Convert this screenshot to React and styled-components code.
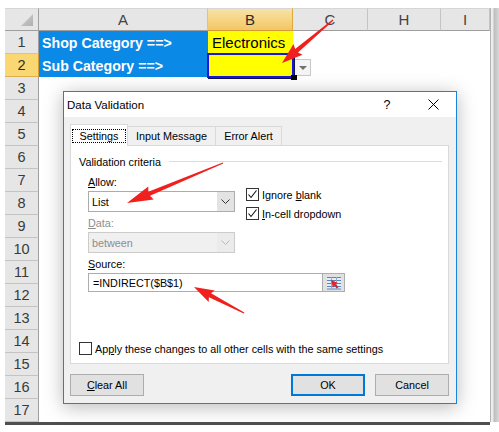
import React from "react";
import styled, { createGlobalStyle } from "styled-components";

const GlobalStyle = createGlobalStyle`
  html, body {
    margin: 0;
    padding: 0;
    background: #fff;
  }
  body {
    font-family: "Liberation Sans", Arial, sans-serif;
  }
  * {
    box-sizing: border-box;
  }
`;

const Stage = styled.div`
  position: relative;
  width: 499px;
  height: 432px;
  overflow: hidden;
  background: #fff;
  padding-top: 8px;
`;

const SheetArea = styled.div`
  display: flex;
  padding-left: 5px;
`;

const Sheet = styled.div`
  display: grid;
  grid-template-columns: 34px 169px 85px 75px 73px 49px;
  grid-template-rows: repeat(18, 23px);
`;

const ScrollEdge = styled.div`
  width: 9px;
  height: 414px;
  border-left: 1px solid #b4b4b4;
  background: linear-gradient(90deg, #ececec 0, #ececec 2px, #bdbdbd 3px, #d8d8d8 100%);
`;

const BottomRule = styled.div`
  margin-left: 5px;
  width: 485px;
  height: 3px;
  background: #4f4f4f;
`;

const CornerCell = styled.div`
  display: flex;
  justify-content: flex-end;
  align-items: flex-end;
  padding: 0 5px 4px 0;
  background: #e6e6e6;
  border-top: 1px solid #d6d6d6;
  border-right: 1px solid #9e9e9e;
  border-bottom: 1px solid #9e9e9e;
`;

const CornerTriangle = styled.div`
  width: 12px;
  height: 12px;
  background: linear-gradient(135deg, #d0d0d0, #b0b0b0);
  clip-path: polygon(100% 0, 100% 100%, 0 100%);
`;

const ColHead = styled.div`
  display: flex;
  align-items: center;
  justify-content: center;
  font-size: 15px;
  color: ${(p) => (p.$active ? "#2b2b2b" : "#444")};
  background: ${(p) =>
    p.$active ? "linear-gradient(180deg, #f9e2a6 0%, #f2c763 100%)" : "#e6e6e6"};
  border-top: 1px solid #d6d6d6;
  border-right: 1px solid ${(p) => (p.$active ? "#e0a640" : "#c4c4c4")};
  border-bottom: 1px solid ${(p) => (p.$active ? "#d79a2f" : "#9e9e9e")};
`;

const RowHead = styled.div`
  display: flex;
  align-items: center;
  justify-content: center;
  font-size: 14.5px;
  color: ${(p) => (p.$active ? "#2b2b2b" : "#3a3a3a")};
  background: ${(p) => (p.$active ? "#f9d874" : "#e6e6e6")};
  border-right: 1px solid ${(p) => (p.$active ? "#d79a2f" : "#9e9e9e")};
  border-bottom: 1px solid ${(p) => (p.$active ? "#e0b050" : "#c4c4c4")};
`;

const Cell = styled.div`
  position: relative;
  display: flex;
  align-items: center;
  padding-left: ${(p) => (p.$bold ? "3px" : "4px")};
  background: ${(p) => p.$bg || "#fff"};
  color: ${(p) => (p.$bold ? "#fff" : "#000")};
  font-weight: ${(p) => (p.$bold ? 700 : 400)};
  font-size: ${(p) => (p.$bold ? "14.2px" : "15px")};
  white-space: nowrap;
`;

const ActiveCell = styled(Cell)`
  z-index: 2;
  &::before {
    content: "";
    position: absolute;
    inset: -1px;
    border: 2px solid #1818d8;
    box-shadow: 1px 1px 0 #101060;
  }
  &::after {
    content: "";
    position: absolute;
    right: -4px;
    bottom: -3px;
    width: 6px;
    height: 5px;
    background: #000;
  }
`;

const DropCell = styled.div`
  display: flex;
  align-items: flex-end;
  padding: 0 0 1px 1px;
`;

const DropButton = styled.div`
  width: 17px;
  height: 17px;
  display: flex;
  align-items: center;
  justify-content: center;
  background: #f4f4f4;
  border: 1px solid #c8c8c8;
  &::after {
    content: "";
    width: 0;
    height: 0;
    border-left: 4px solid transparent;
    border-right: 4px solid transparent;
    border-top: 4px solid #707070;
  }
`;

/* dialog */

const Dialog = styled.div`
  position: absolute;
  left: 63px;
  top: 91px;
  width: 394px;
  height: 313px;
  display: flex;
  flex-direction: column;
  border: 1px solid #1c84d6;
  background: #f0f0f0;
  box-shadow: 0 3px 18px rgba(0, 0, 0, 0.28);
  font-family: "Liberation Sans", Arial, sans-serif;
  font-size: 10.8px;
  color: #000;
  z-index: 5;

  u {
    text-decoration: underline;
    text-underline-offset: 1px;
  }
`;

const TitleBar = styled.div`
  height: 25px;
  display: flex;
  align-items: center;
  padding-left: 3px;
  background: #fff;
  font-size: 11.5px;
`;

const TitleText = styled.div`
  flex: 1;
`;

const TitleButton = styled.div`
  width: 46px;
  height: 25px;
  display: flex;
  align-items: center;
  justify-content: center;
  font-size: 12.5px;
`;

const Body = styled.div`
  flex: 1;
  display: flex;
  flex-direction: column;
  padding: 7px 7px 0 6px;
`;

const Tabs = styled.div`
  display: flex;
  align-items: flex-end;
  height: 21px;
`;

const Tab = styled.div`
  position: relative;
  z-index: ${(p) => (p.$active ? 1 : 0)};
  width: ${(p) => p.$w}px;
  height: ${(p) => (p.$active ? "22px" : "19px")};
  margin-bottom: ${(p) => (p.$active ? "-1px" : "0")};
  margin-left: ${(p) => (p.$first ? "0" : "-1px")};
  display: flex;
  align-items: center;
  justify-content: center;
  background: ${(p) => (p.$active ? "#fff" : "#f0f0f0")};
  border: 1px solid #d9d9d9;
  border-bottom: none;
`;

const FocusRing = styled.span`
  display: flex;
  align-items: center;
  height: 14px;
  padding: 0 6px;
  border: 1px dotted #000;
`;

const Panel = styled.div`
  height: 219px;
  display: flex;
  flex-direction: column;
  padding: 8px 6px 0 8px;
  background: #fff;
  border: 1px solid #d9d9d9;
`;

const GroupHeader = styled.div`
  height: 16px;
  display: flex;
  align-items: center;
  gap: 8px;
  &::after {
    content: "";
    flex: 1;
    border-top: 1px solid #dcdcdc;
    margin-top: -1px;
  }
`;

const Indent = styled.div`
  display: flex;
  flex-direction: column;
  padding-left: 9px;
`;

const CriteriaGrid = styled.div`
  display: flex;
  gap: 11px;
`;

const FieldStack = styled.div`
  display: flex;
  flex-direction: column;
`;

const Label = styled.div`
  height: 14px;
  line-height: 14px;
  margin-top: ${(p) => p.$mt || 0}px;
  color: ${(p) => (p.$disabled ? "#8d8d8d" : "#000")};
`;

const Select = styled.div`
  width: 147px;
  height: 21px;
  margin-top: 2px;
  display: flex;
  border: 1px solid ${(p) => (p.$disabled ? "#cccccc" : "#acacac")};
  background: ${(p) => (p.$disabled ? "#f0f0f0" : "#fff")};
  color: ${(p) => (p.$disabled ? "#8d8d8d" : "#000")};
`;

const SelectValue = styled.div`
  flex: 1;
  display: flex;
  align-items: center;
  padding-left: 3px;
`;

const SelectArrow = styled.div`
  width: 17px;
  display: flex;
  align-items: center;
  justify-content: center;
  background: ${(p) => (p.$disabled ? "#ebebeb" : "#e3e3e3")};
`;

const OptionStack = styled.div`
  display: flex;
  flex-direction: column;
  gap: 6px;
  padding-top: 18px;
`;

const CheckRow = styled.label`
  display: flex;
  align-items: center;
  gap: 3px;
  height: 13px;
  margin-top: ${(p) => p.$mt || 0}px;
  white-space: nowrap;
`;

const Box = styled.span`
  width: 13px;
  height: 13px;
  flex-shrink: 0;
  display: flex;
  align-items: center;
  justify-content: center;
  border: 1px solid #333;
  background: #fff;
`;

const SourceRow = styled.div`
  display: flex;
  margin-top: 2px;
`;

const SourceInput = styled.div`
  width: 235px;
  height: 19px;
  display: flex;
  align-items: center;
  padding-left: 4px;
  background: #fff;
  border: 1px solid #adadad;
`;

const RefButton = styled.div`
  width: 22px;
  height: 19px;
  display: flex;
  align-items: center;
  justify-content: center;
  background: #e1e1e1;
  border: 1px solid #adadad;
  border-left: none;
`;

const Footer = styled.div`
  display: flex;
  gap: 10px;
  margin-top: 10px;
`;

const Spacer = styled.div`
  flex: 1;
`;

const Button = styled.div`
  width: 74px;
  height: 22px;
  display: flex;
  align-items: center;
  justify-content: center;
  background: #e1e1e1;
  border: ${(p) => (p.$default ? "2px solid #0078d7" : "1px solid #adadad")};
`;

const Overlay = styled.svg`
  position: absolute;
  left: 0;
  top: 0;
  z-index: 10;
  pointer-events: none;
`;

function Chevron({ color }) {
  return (
    <svg width="9" height="5" viewBox="0 0 9 5">
      <polyline points="0.5,0.5 4.5,4.5 8.5,0.5" fill="none" stroke={color} strokeWidth="1" />
    </svg>
  );
}

function Check() {
  return (
    <svg width="11" height="11" viewBox="0 0 11 11">
      <polyline points="1.5,5.5 4,8.5 9.5,1.5" fill="none" stroke="#111" strokeWidth="1.1" />
    </svg>
  );
}

function CloseGlyph() {
  return (
    <svg width="11" height="11" viewBox="0 0 11 11">
      <path d="M0.5 0.5 L10.5 10.5 M10.5 0.5 L0.5 10.5" stroke="#000" strokeWidth="1" />
    </svg>
  );
}

function RefIcon() {
  return (
    <svg width="16" height="14" viewBox="0 0 16 14">
      <rect x="1" y="1" width="14" height="12" fill="#e6eef8" />
      <path d="M1 1.5 H15 M1 4.5 H15 M1 7.5 H15 M1 10.5 H15 M1 13 H15" stroke="#5a82bd" strokeWidth="1" />
      <path d="M5.5 1 V13 M10.5 1 V13" stroke="#8fa9d2" strokeWidth="1" />
      <polygon points="5,4 12,7 9.5,8 12.5,11 11,12.5 8,9.5 7,12" fill="#e8201e" />
    </svg>
  );
}

function arrowPoints(x1, y1, x2, y2, head, headW, tail, neck) {
  const dx = x2 - x1;
  const dy = y2 - y1;
  const len = Math.hypot(dx, dy);
  const ux = dx / len;
  const uy = dy / len;
  const nx = -uy;
  const ny = ux;
  const bx = x2 - ux * head;
  const by = y2 - uy * head;
  const pts = [
    [x1 + (nx * tail) / 2, y1 + (ny * tail) / 2],
    [bx + (nx * neck) / 2, by + (ny * neck) / 2],
    [bx - ux * 2 + (nx * headW) / 2, by - uy * 2 + (ny * headW) / 2],
    [x2, y2],
    [bx - ux * 2 - (nx * headW) / 2, by - uy * 2 - (ny * headW) / 2],
    [bx - (nx * neck) / 2, by - (ny * neck) / 2],
    [x1 - (nx * tail) / 2, y1 - (ny * tail) / 2],
  ];
  return pts.map((p) => p.map((v) => v.toFixed(1)).join(",")).join(" ");
}

const arrows = [
  { from: [333, 20], to: [282, 63], head: 19, headW: 14 },
  { from: [223, 163], to: [127, 203], head: 24, headW: 14 },
  { from: [244, 313], to: [194, 287], head: 18, headW: 13 },
];

const columns = ["A", "B", "C", "H", "I"];

function SheetGrid() {
  const rows = [];
  for (let r = 1; r <= 17; r++) {
    rows.push(<RowHead key={`h${r}`} $active={r === 2}>{r}</RowHead>);
    if (r === 1) {
      rows.push(
        <Cell key="a1" $bg="#0b89e6" $bold>Shop Category ==&gt;</Cell>,
        <Cell key="b1" $bg="#ffff00">Electronics</Cell>,
        <Cell key="c1" />,
        <Cell key="h1" />,
        <Cell key="i1" />
      );
    } else if (r === 2) {
      rows.push(
        <Cell key="a2" $bg="#0b89e6" $bold>Sub Category ==&gt;</Cell>,
        <ActiveCell key="b2" $bg="#ffff00" />,
        <DropCell key="c2"><DropButton /></DropCell>,
        <Cell key="h2" />,
        <Cell key="i2" />
      );
    } else {
      columns.forEach((c) => rows.push(<Cell key={`${c}${r}`} />));
    }
  }
  return (
    <Sheet>
      <CornerCell>
        <CornerTriangle />
      </CornerCell>
      {columns.map((c) => (
        <ColHead key={c} $active={c === "B"}>{c}</ColHead>
      ))}
      {rows}
    </Sheet>
  );
}

function ValidationDialog() {
  return (
    <Dialog>
      <TitleBar>
        <TitleText>Data Validation</TitleText>
        <TitleButton>?</TitleButton>
        <TitleButton><CloseGlyph /></TitleButton>
      </TitleBar>
      <Body>
        <Tabs>
          <Tab $active $first $w={58}><FocusRing>Settings</FocusRing></Tab>
          <Tab $w={89}>Input Message</Tab>
          <Tab $w={67}>Error Alert</Tab>
        </Tabs>
        <Panel>
          <GroupHeader>Validation criteria</GroupHeader>
          <Indent>
            <CriteriaGrid>
              <FieldStack>
                <Label $mt={5}><u>A</u>llow:</Label>
                <Select>
                  <SelectValue>List</SelectValue>
                  <SelectArrow><Chevron color="#333" /></SelectArrow>
                </Select>
                <Label $mt={4} $disabled><u>D</u>ata:</Label>
                <Select $disabled>
                  <SelectValue>between</SelectValue>
                  <SelectArrow $disabled><Chevron color="#b8b8b8" /></SelectArrow>
                </Select>
              </FieldStack>
              <OptionStack>
                <CheckRow>
                  <Box><Check /></Box>
                  <span>Ignore <u>b</u>lank</span>
                </CheckRow>
                <CheckRow>
                  <Box><Check /></Box>
                  <span><u>I</u>n-cell dropdown</span>
                </CheckRow>
              </OptionStack>
            </CriteriaGrid>
            <Label $mt={4}><u>S</u>ource:</Label>
            <SourceRow>
              <SourceInput>=INDIRECT($B$1)</SourceInput>
              <RefButton><RefIcon /></RefButton>
            </SourceRow>
          </Indent>
          <CheckRow $mt={50}>
            <Box />
            <span>Ap<u>p</u>ly these changes to all other cells with the same settings</span>
          </CheckRow>
        </Panel>
        <Footer>
          <Button><span><u>C</u>lear All</span></Button>
          <Spacer />
          <Button $default>OK</Button>
          <Button>Cancel</Button>
        </Footer>
      </Body>
    </Dialog>
  );
}

export default function App() {
  return (
    <>
      <GlobalStyle />
      <Stage>
        <SheetArea>
          <SheetGrid />
          <ScrollEdge />
        </SheetArea>
        <BottomRule />
        <ValidationDialog />
        <Overlay width="499" height="432" viewBox="0 0 499 432">
          {arrows.map((a, i) => (
            <polygon
              key={i}
              points={arrowPoints(a.from[0], a.from[1], a.to[0], a.to[1], a.head, a.headW, 1.2, 4.5)}
              fill="#f0201e"
            />
          ))}
        </Overlay>
      </Stage>
    </>
  );
}
